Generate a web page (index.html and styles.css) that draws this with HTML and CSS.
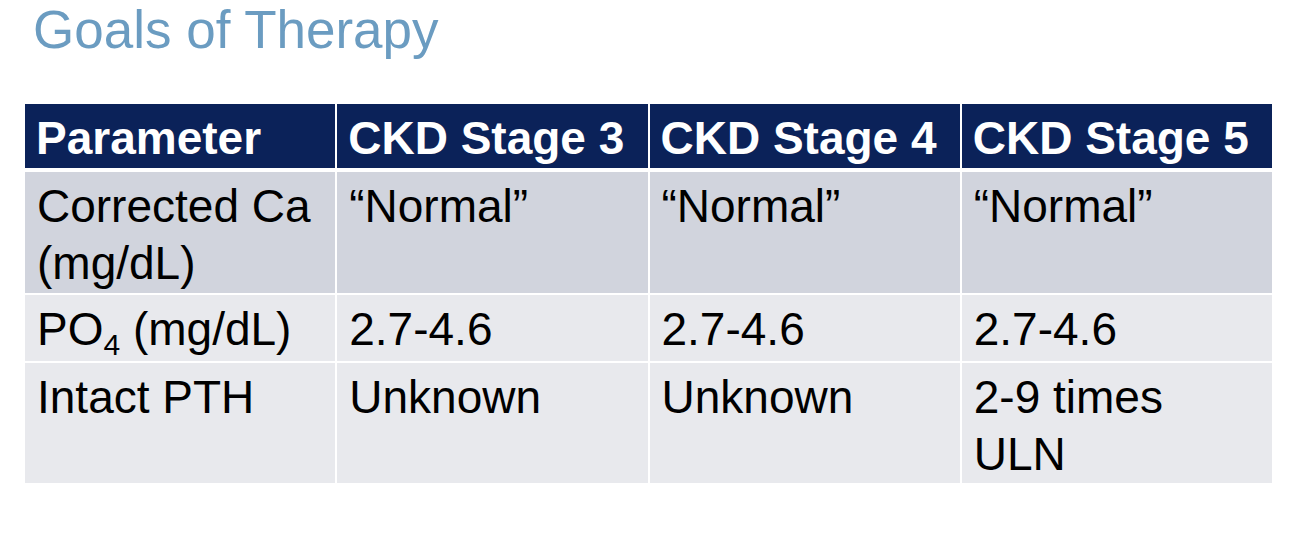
FILE: index.html
```html
<!DOCTYPE html>
<html lang="en">
<head>
<meta charset="utf-8">
<title>Goals of Therapy</title>
<link rel="stylesheet" href="styles.css">
</head>
<body>
<h1 class="title">Goals of Therapy</h1>
<div class="table">
  <div class="row head">
    <div class="cell">Parameter</div>
    <div class="cell">CKD Stage 3</div>
    <div class="cell">CKD Stage 4</div>
    <div class="cell">CKD Stage 5</div>
  </div>
  <div class="body">
    <div class="row dark r1">
      <div class="cell">Corrected Ca (mg/dL)</div>
      <div class="cell">“Normal”</div>
      <div class="cell">“Normal”</div>
      <div class="cell">“Normal”</div>
    </div>
    <div class="row light r2">
      <div class="cell">PO<sub>4</sub> (mg/dL)</div>
      <div class="cell">2.7-4.6</div>
      <div class="cell">2.7-4.6</div>
      <div class="cell">2.7-4.6</div>
    </div>
    <div class="row light r3">
      <div class="cell">Intact PTH</div>
      <div class="cell">Unknown</div>
      <div class="cell">Unknown</div>
      <div class="cell">2-9 times ULN</div>
    </div>
  </div>
</div>
</body>
</html>
```

FILE: styles.css
```css
html, body {
  margin: 0;
  padding: 0;
  background: #ffffff;
}

body {
  font-family: "Liberation Sans", Arial, sans-serif;
  width: 1296px;
  height: 540px;
  overflow: hidden;
}

.title {
  margin: 0;
  padding-left: 33px;
  font-size: 53px;
  font-weight: normal;
  line-height: 60px;
  color: #6b9cc1;
  letter-spacing: 0;
}

.table {
  margin: 44px 0 0 25px;
  width: 1247px;
}

.body {
  display: flex;
  flex-direction: column;
  gap: 2px;
  margin-top: 4px;
}

.row {
  display: grid;
  grid-template-columns: repeat(4, 1fr);
  column-gap: 2px;
}

.cell {
  padding: 6px 16px 0 12px;
  font-size: 46px;
  line-height: 57px;
  color: #000000;
  box-sizing: border-box;
}

.head {
  height: 64px;
}

.head .cell {
  background: #0b2259;
  color: #ffffff;
  font-weight: bold;
  padding-left: 11px;
  padding-right: 4px;
  white-space: nowrap;
}

.dark .cell {
  background: #d1d4dd;
}

.light .cell {
  background: #e8e9ed;
}

.r1 {
  height: 121px;
}

.r2 {
  height: 66px;
}

.r3 {
  height: 120px;
}

sub {
  font-size: 30px;
  line-height: 0;
  vertical-align: -10px;
}
```
